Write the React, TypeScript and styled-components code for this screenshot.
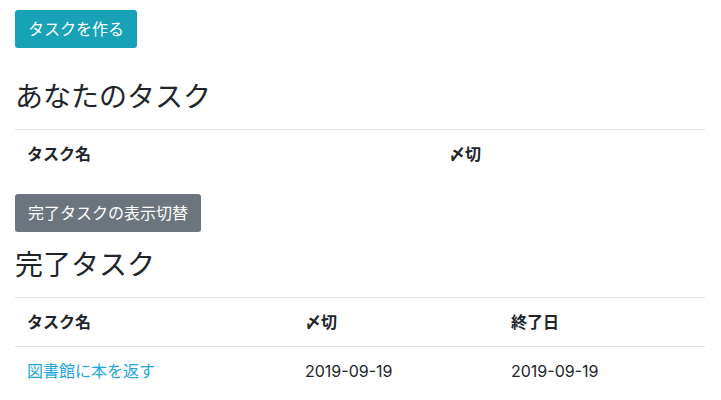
import * as React from 'react'
import styled, { createGlobalStyle } from 'styled-components'

const GlobalStyle = createGlobalStyle`
  html, body {
    margin: 0;
    padding: 0;
    background: #fff;
  }
  body {
    font-family: Inter, 'Noto Sans CJK JP', sans-serif;
    font-size: 16px;
    line-height: 1.5;
    color: #212529;
  }
`

type Task = { name: string; deadline: string; doneAt?: string }

const done: Task[] = [{ name: '図書館に本を返す', deadline: '2019-09-19', doneAt: '2019-09-19' }]

export default function App() {
  return (
    <>
      <GlobalStyle />
      <Container>
        <Toolbar>
          <Button variant='info'>タスクを作る</Button>
        </Toolbar>
        <Heading>あなたのタスク</Heading>
        <Table>
          <colgroup>
            <col style={{ width: 422 }} />
            <col />
          </colgroup>
          <thead>
            <tr>
              <Th>タスク名</Th>
              <Th>〆切</Th>
            </tr>
          </thead>
          <tbody></tbody>
        </Table>
        <Button variant='secondary'>完了タスクの表示切替</Button>
        <Heading compact>完了タスク</Heading>
        <Table>
          <colgroup>
            <col style={{ width: 278 }} />
            <col style={{ width: 206 }} />
            <col />
          </colgroup>
          <thead>
            <tr>
              <Th>タスク名</Th>
              <Th>〆切</Th>
              <Th>終了日</Th>
            </tr>
          </thead>
          <tbody>
            {done.map(t => (
              <tr key={t.name}>
                <Td>
                  <TaskLink href='#'>{t.name}</TaskLink>
                </Td>
                <Td>{t.deadline}</Td>
                <Td>{t.doneAt}</Td>
              </tr>
            ))}
          </tbody>
        </Table>
      </Container>
    </>
  )
}

const Container = styled.div`
  padding: 10px 16px 0 15px;
`
const Toolbar = styled.div`
  margin-bottom: 32px;
`
const Button = styled.button<{ variant: 'info' | 'secondary' }>`
  display: inline-block;
  font-family: inherit;
  font-size: 16px;
  line-height: 24px;
  padding: 7px 13px;
  border: 0;
  border-radius: 3px;
  color: #fff;
  background: ${p => (p.variant === 'info' ? '#17a2b8' : '#6c757d')};
  cursor: pointer;
`
const Heading = styled.h3<{ compact?: boolean }>`
  margin: ${p => (p.compact ? '16px' : '0')} 0 15px;
  font-size: 28px;
  font-weight: 400;
  line-height: 34px;
`
const Table = styled.table`
  width: 100%;
  table-layout: fixed;
  border-collapse: collapse;
  margin-bottom: 16px;
`
const Th = styled.th`
  text-align: left;
  padding: 12px;
  font-size: 16px;
  font-weight: 700;
  line-height: 24px;
  border-top: 1px solid #dee2e6;
`
const Td = styled.td`
  padding: 12px;
  font-size: 16px;
  line-height: 24px;
  border-top: 1px solid #dee2e6;
`
const TaskLink = styled.a`
  color: #20a6dc;
  text-decoration: none;
`
